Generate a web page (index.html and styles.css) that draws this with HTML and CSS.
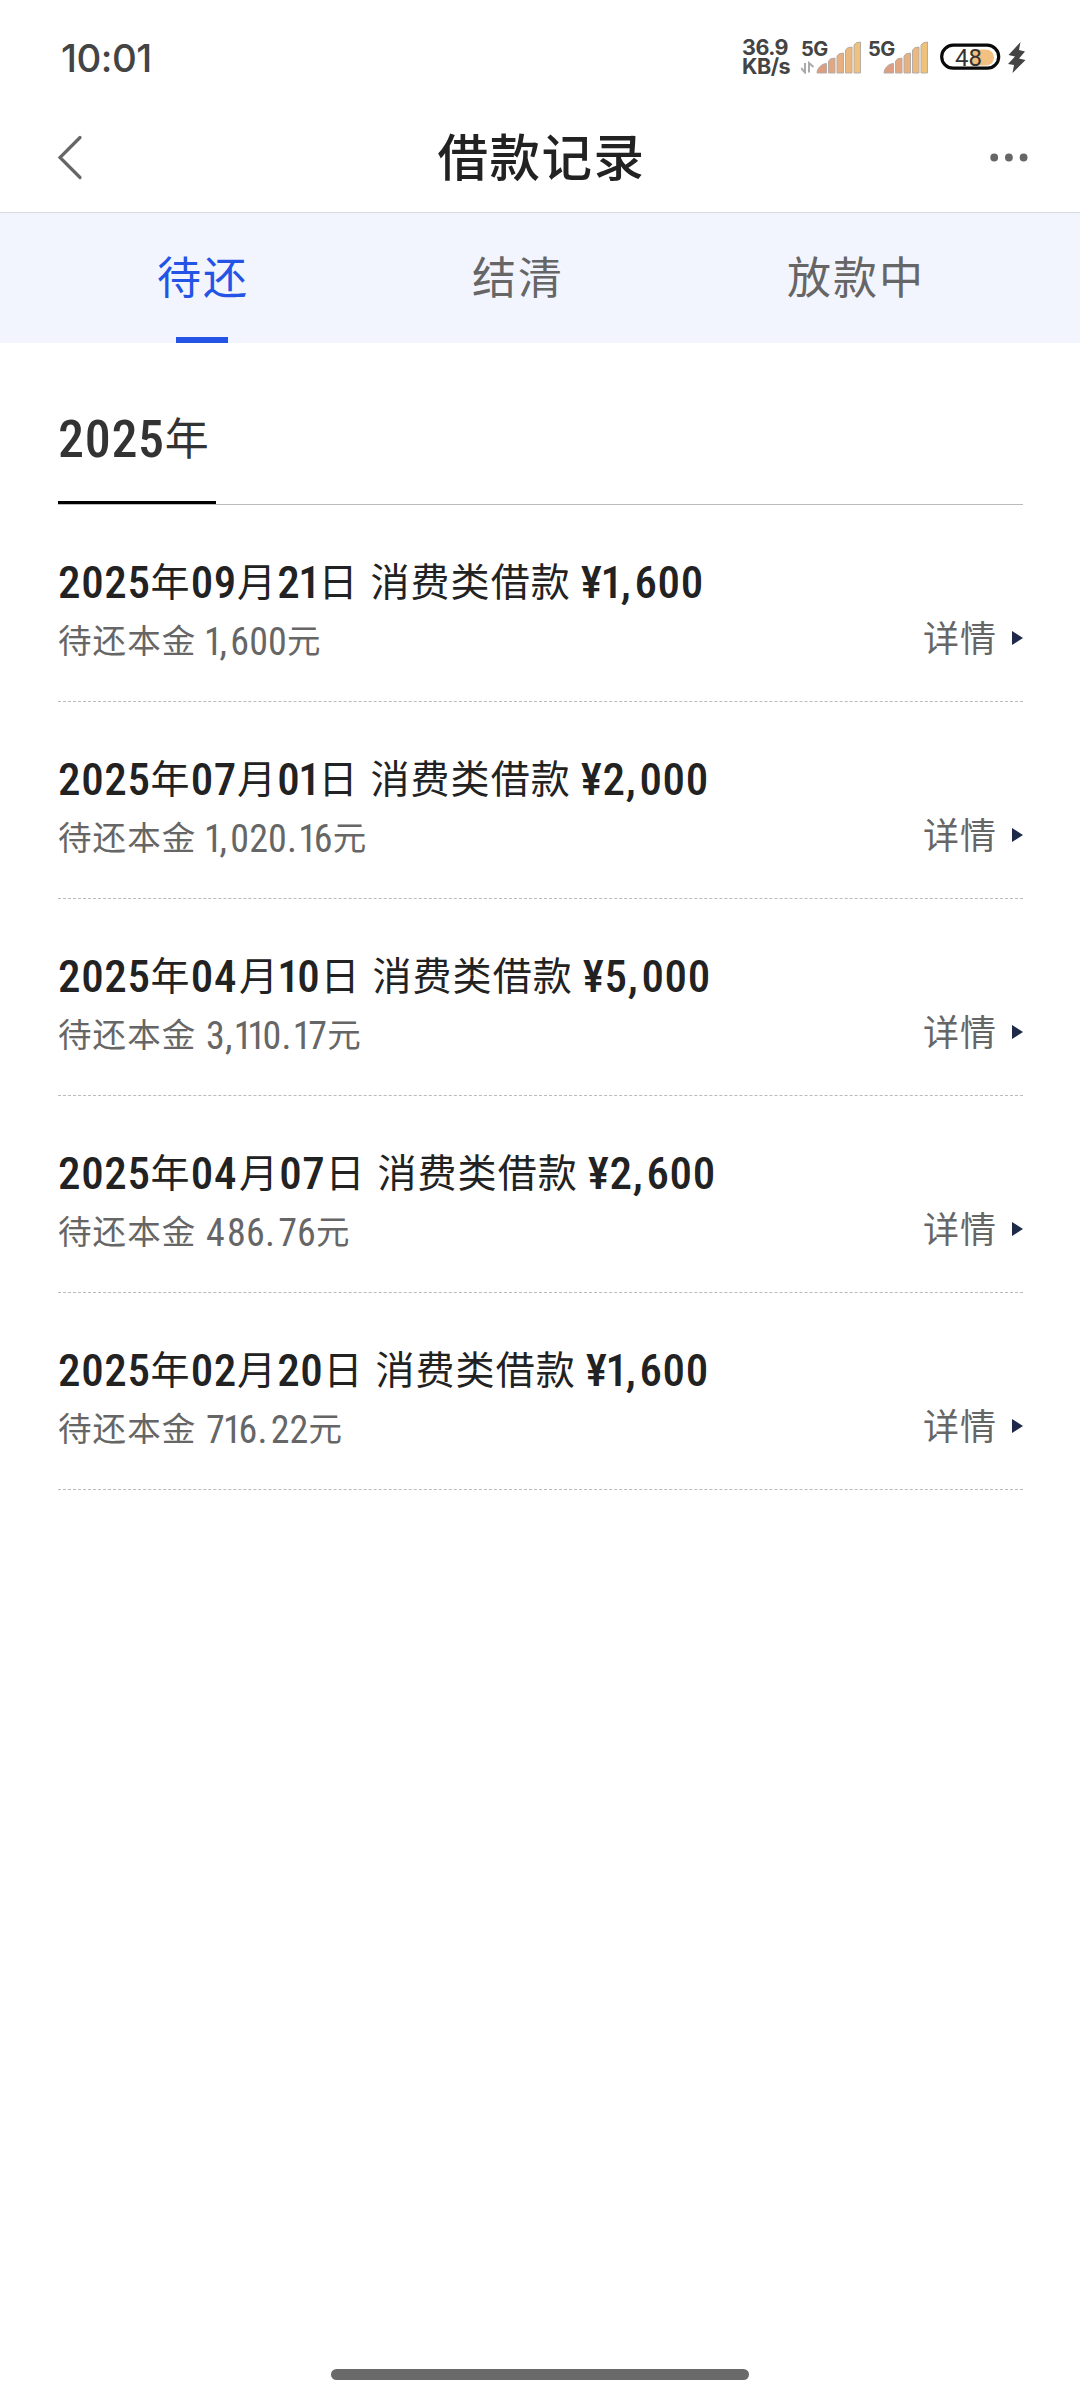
FILE: index.html
```html
<!DOCTYPE html>
<html lang="zh-CN">
<head>
<meta charset="utf-8">
<title>借款记录</title>
<link rel="stylesheet" href="styles.css">
</head>
<body>
<header class="status">
  <span class="time">10:01</span>
  <div class="status-right">
    <div class="speed"><span>36.9</span><span>KB/s</span></div>
    <svg class="signal" width="62" height="36" viewBox="0 0 62 36">
      <text x="0" y="18" class="net">5G</text>
      <g stroke="#b5aca6" stroke-width="1">
        <path d="M16 35 C16 30 21 25.500 25.500 25.500 V35 Z" fill="#dc9d80"/>
        <path d="M27.500 35 V23 Q29 20 34 20 V35 Z" fill="#e2a680"/>
        <path d="M36 35 V18 Q37.500 15 42.500 15 V35 Z" fill="#e7b080"/>
        <path d="M44.500 35 V12 Q46 9 51 9 V35 Z" fill="#ebb97e"/>
        <path d="M53 35 V7 Q54.500 4 59.500 4 V35 Z" fill="#eec27a"/>
      </g>
      <path d="M0 30 L4 34.500 V25 M8 34.500 V25 L12.500 29" fill="none" stroke="#aaa" stroke-width="2"/>
    </svg>
    <svg class="signal second" width="62" height="36" viewBox="0 0 62 36">
      <text x="0" y="18" class="net">5G</text>
      <g stroke="#b5aca6" stroke-width="1">
        <path d="M16 35 C16 30 21 25.500 25.500 25.500 V35 Z" fill="#dc9d80"/>
        <path d="M27.500 35 V23 Q29 20 34 20 V35 Z" fill="#e2a680"/>
        <path d="M36 35 V18 Q37.500 15 42.500 15 V35 Z" fill="#e7b080"/>
        <path d="M44.500 35 V12 Q46 9 51 9 V35 Z" fill="#ebb97e"/>
        <path d="M53 35 V7 Q54.500 4 59.500 4 V35 Z" fill="#eec27a"/>
      </g>
    </svg>
    <svg class="battery" width="87" height="36" viewBox="0 0 87 36">
      <path d="M32 11.500 H46 A8 8 0 0 1 46 27.500 H32 Z" fill="#f2c080"/>
      <rect x="1.700" y="7.200" width="57" height="23" rx="11.500" fill="none" stroke="#0a0a0a" stroke-width="3.200"/>
      <text x="15" y="27.500" class="level">48</text>
      <path d="M80.500 4 L68.500 17 L75 18.500 L68 26 L74 27 L72.500 35 L85.500 22 L79 20.500 L85 13.500 L79 12 Z" fill="#444"/>
    </svg>
  </div>
</header>
<nav class="nav">
  <svg class="back" width="26" height="46" viewBox="0 0 26 46"><path d="M23 3.500 L3 23.500 L23 43.500" fill="none" stroke="#666" stroke-width="3.200" stroke-linecap="round"/></svg>
  <h1>借款记录</h1>
  <svg class="more" width="38" height="10" viewBox="0 0 38 10" fill="#666"><circle cx="4.200" cy="5.500" r="3.900"/><circle cx="18.900" cy="5.500" r="3.900"/><circle cx="33.600" cy="5.500" r="3.900"/></svg>
</nav>
<div class="tabs">
  <a class="tab active">待还</a>
  <a class="tab">结清</a>
  <a class="tab">放款中</a>
</div>
<main class="content">
  <div class="year"><h2><b>2025</b>年</h2></div>
  <ul class="list">
    <li class="item">
      <p class="title"><b>2025</b>年<b>09</b>月<b>2<i>1</i></b>日 <span>消费类借款</span> <b>¥<i>1</i><u>,</u>600</b></p>
      <div class="row"><p class="sub">待还本金 <b><i>1</i><u>,</u>600</b>元</p><a class="detail">详情</a></div>
    </li>
    <li class="item">
      <p class="title"><b>2025</b>年<b>07</b>月<b>0<i>1</i></b>日 <span>消费类借款</span> <b>¥2<u>,</u>000</b></p>
      <div class="row"><p class="sub">待还本金 <b><i>1</i><u>,</u>020<u>.</u><i>1</i>6</b>元</p><a class="detail">详情</a></div>
    </li>
    <li class="item">
      <p class="title"><b>2025</b>年<b>0<em>4</em></b>月<b><i>1</i>0</b>日 <span>消费类借款</span> <b>¥5<u>,</u>000</b></p>
      <div class="row"><p class="sub">待还本金 <b>3<u>,</u><i>1</i><i>1</i>0<u>.</u><i>1</i>7</b>元</p><a class="detail">详情</a></div>
    </li>
    <li class="item">
      <p class="title"><b>2025</b>年<b>0<em>4</em></b>月<b>07</b>日 <span>消费类借款</span> <b>¥2<u>,</u>600</b></p>
      <div class="row"><p class="sub">待还本金 <b><em>4</em>86<u>.</u>76</b>元</p><a class="detail">详情</a></div>
    </li>
    <li class="item">
      <p class="title"><b>2025</b>年<b>02</b>月<b>20</b>日 <span>消费类借款</span> <b>¥<i>1</i><u>,</u>600</b></p>
      <div class="row"><p class="sub">待还本金 <b>7<i>1</i>6<u>.</u>22</b>元</p><a class="detail">详情</a></div>
    </li>
  </ul>
</main>
<footer class="home"></footer>
</body>
</html>
```
FILE: styles.css
```css
* { box-sizing: border-box; margin: 0; padding: 0; }
body {
  display: flex;
  flex-direction: column;
  width: 1080px;
  height: 2400px;
  background: #fff;
  color: #222;
  font-family: "Noto Sans CJK SC", sans-serif;
}
.status {
  display: flex;
  justify-content: space-between;
  height: 110px;
  padding: 38px 53px 0 61px;
  color: #444;
  font-family: Inter, sans-serif;
}
.time { font-size: 38.500px; font-weight: 500; line-height: 41px; letter-spacing: -0.500px; }
.status-right { display: flex; }
.speed {
  display: flex;
  flex-direction: column;
  width: 59px;
  font-size: 21.500px;
  font-weight: 700;
  line-height: 19px;
  letter-spacing: -.500px;
}
.net { font: 700 20px Inter, sans-serif; fill: #444; letter-spacing: -.500px; }
.signal.second { margin-left: 5px; }
.battery { margin-left: 10px; }
.level { font: 400 24px Roboto, sans-serif; fill: #333; }
.nav {
  display: flex;
  align-items: center;
  justify-content: space-between;
  height: 102px;
  padding: 0 52px 8px 57px;
}
h1 {
  padding: 0 0 6px 10px;
  font-size: 50.500px;
  font-weight: 480;
  line-height: 70px;
  letter-spacing: 1.500px;
}
.tabs {
  display: flex;
  gap: 223px;
  height: 131px;
  padding-left: 157px;
  border-top: 1px solid #d9dae2;
  background: #f3f5fe;
}
.tab {
  display: flex;
  flex-direction: column;
  align-items: center;
  font-size: 44px;
  line-height: 124px;
  letter-spacing: 2px;
  color: #666;
}
.active { color: #2354e6; }
.active::after {
  content: "";
  width: 52px;
  height: 6px;
  margin-right: 2px;
  background: #2354e6;
}
.content { flex: 1; padding: 0 57px 0 58px; }
.year { height: 162px; border-bottom: 1px solid #bbb; }
b {
  font-family: "Roboto Condensed", Roboto, sans-serif;
  line-height: 0;
  vertical-align: -1.500px;
}
i { font-style: normal; margin: 0 -3px; }
em { font-style: normal; margin-right: 2px; }
u { text-decoration: none; margin-right: 3px; }
h2 {
  width: 158px;
  height: 161px;
  padding-top: 53px;
  border-bottom: 3px solid #000;
  font-size: 44px;
  font-weight: 400;
  line-height: 80px;
  color: #333;
}
h2 b { font-size: 52px; font-weight: 540; letter-spacing: .700px; vertical-align: -2px; }
.list { list-style: none; }
.item { height: 197px; padding-top: 44px; border-bottom: 1px dashed #bbb; }
.title { font-size: 39px; line-height: 60px; letter-spacing: 1.100px; }
.title span { margin-left: 2px; }
.title b { font-size: 45px; font-weight: 550; letter-spacing: .650px; }
.title i { margin: 0 -3px 0 -2px; }
.row { display: flex; justify-content: space-between; margin-top: 6px; }
.sub { font-size: 33.500px; line-height: 48px; letter-spacing: 1.100px; color: #666; }
.sub b { font-size: 38px; font-weight: 400; letter-spacing: .200px; margin-left: 1px; }
.sub i { margin: 0 -3.500px 0 -2px; }
.detail {
  display: flex;
  align-items: center;
  height: 43px;
  font-size: 36px;
  line-height: 43px;
  letter-spacing: 1px;
  color: #666;
}
.detail::after {
  content: "";
  margin: 3px 0 0 15px;
  border: 7px solid transparent;
  border-left: 11px solid #1f2a4a;
  border-right: 0;
}
.home { width: 418px; height: 11px; margin: 0 auto 20px; border-radius: 6px; background: #6a6a6a; }
```
